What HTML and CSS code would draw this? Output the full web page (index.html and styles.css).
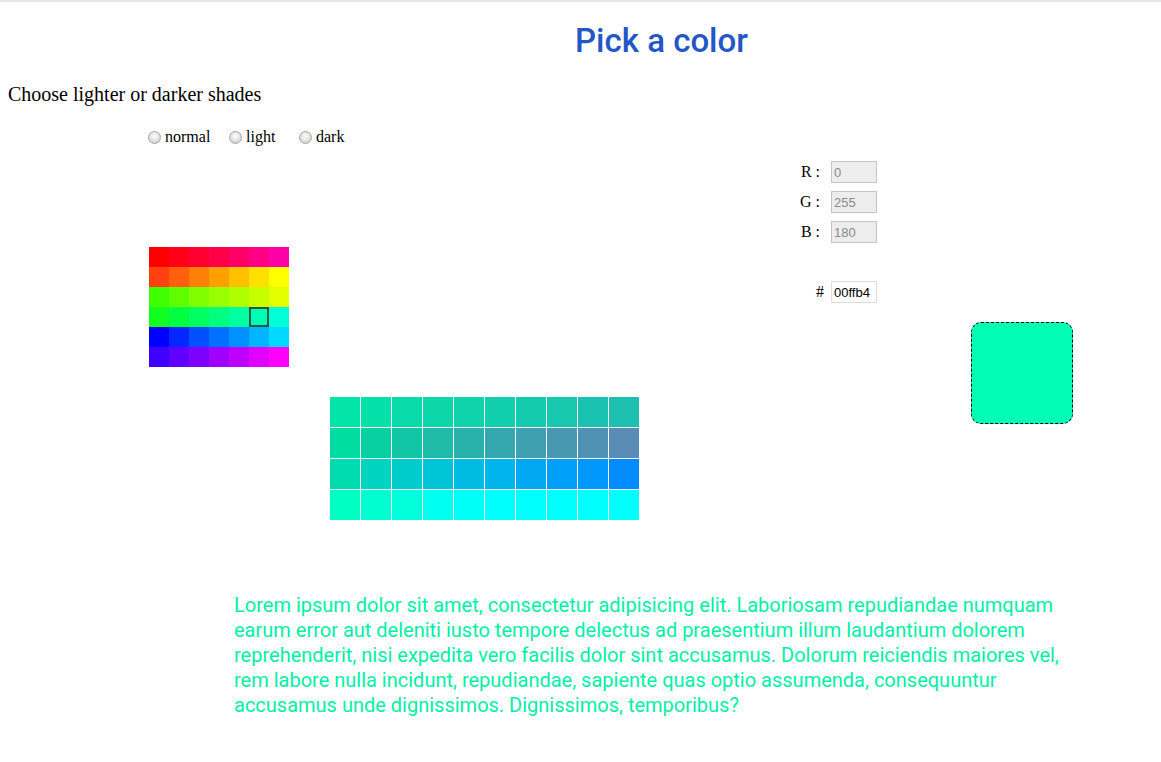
FILE: index.html
```html
<!DOCTYPE html>
<html lang="en">
<head>
<meta charset="utf-8">
<title>Pick a color</title>
<link rel="stylesheet" href="styles.css">
</head>
<body>
<div class="page">
  <h1 class="title">Pick a color</h1>
  <p class="subtitle">Choose lighter or darker shades</p>

  <div class="main">
    <div class="left">
      <div class="options">
        <label class="opt opt-normal"><input type="radio" name="shade" class="radio">normal</label>
        <label class="opt opt-light"><input type="radio" name="shade" class="radio">light</label>
        <label class="opt opt-dark"><input type="radio" name="shade" class="radio">dark</label>
      </div>

      <div class="palette">
        <div class="cell" style="background:#ff0000"></div>
        <div class="cell" style="background:#ff0018"></div>
        <div class="cell" style="background:#ff0030"></div>
        <div class="cell" style="background:#ff0048"></div>
        <div class="cell" style="background:#ff0066"></div>
        <div class="cell" style="background:#ff0084"></div>
        <div class="cell" style="background:#ff00a6"></div>

        <div class="cell" style="background:#ff4010"></div>
        <div class="cell" style="background:#ff6010"></div>
        <div class="cell" style="background:#ff8008"></div>
        <div class="cell" style="background:#ffa000"></div>
        <div class="cell" style="background:#ffc000"></div>
        <div class="cell" style="background:#ffe000"></div>
        <div class="cell" style="background:#ffff00"></div>

        <div class="cell" style="background:#40ff00"></div>
        <div class="cell" style="background:#60ff00"></div>
        <div class="cell" style="background:#80ff00"></div>
        <div class="cell" style="background:#98ff00"></div>
        <div class="cell" style="background:#b0ff00"></div>
        <div class="cell" style="background:#c8ff00"></div>
        <div class="cell" style="background:#e4ff00"></div>

        <div class="cell" style="background:#10ff20"></div>
        <div class="cell" style="background:#00ff40"></div>
        <div class="cell" style="background:#00ff60"></div>
        <div class="cell" style="background:#00ff80"></div>
        <div class="cell" style="background:#00ffa0"></div>
        <div class="cell selected" style="background:#00ffb4"></div>
        <div class="cell" style="background:#00ffd8"></div>

        <div class="cell" style="background:#0000ff"></div>
        <div class="cell" style="background:#0028ff"></div>
        <div class="cell" style="background:#0050ff"></div>
        <div class="cell" style="background:#0070ff"></div>
        <div class="cell" style="background:#0090ff"></div>
        <div class="cell" style="background:#00b4ff"></div>
        <div class="cell" style="background:#00d8ff"></div>

        <div class="cell" style="background:#4000ff"></div>
        <div class="cell" style="background:#6000ff"></div>
        <div class="cell" style="background:#8000ff"></div>
        <div class="cell" style="background:#a000ff"></div>
        <div class="cell" style="background:#c000ff"></div>
        <div class="cell" style="background:#e000ff"></div>
        <div class="cell" style="background:#ff00ff"></div>
      </div>

      <div class="shades">
        <div class="shade" style="background:#02e4a7"></div>
        <div class="shade" style="background:#05dfa8"></div>
        <div class="shade" style="background:#08dba9"></div>
        <div class="shade" style="background:#0bd7aa"></div>
        <div class="shade" style="background:#0ed3ab"></div>
        <div class="shade" style="background:#11cfac"></div>
        <div class="shade" style="background:#14cbad"></div>
        <div class="shade" style="background:#17c7ae"></div>
        <div class="shade" style="background:#1ac3af"></div>
        <div class="shade" style="background:#1fbfb0"></div>

        <div class="shade" style="background:#00dca0"></div>
        <div class="shade" style="background:#08d0a2"></div>
        <div class="shade" style="background:#12c6a5"></div>
        <div class="shade" style="background:#1dbba8"></div>
        <div class="shade" style="background:#28b0ab"></div>
        <div class="shade" style="background:#33a8ae"></div>
        <div class="shade" style="background:#3ea0b0"></div>
        <div class="shade" style="background:#4898b2"></div>
        <div class="shade" style="background:#5092b3"></div>
        <div class="shade" style="background:#5a8db5"></div>

        <div class="shade" style="background:#00dcb0"></div>
        <div class="shade" style="background:#00d4c0"></div>
        <div class="shade" style="background:#00cccc"></div>
        <div class="shade" style="background:#00c4d8"></div>
        <div class="shade" style="background:#00bce2"></div>
        <div class="shade" style="background:#00b4ec"></div>
        <div class="shade" style="background:#00a8f2"></div>
        <div class="shade" style="background:#00a0f8"></div>
        <div class="shade" style="background:#0098fc"></div>
        <div class="shade" style="background:#008cff"></div>

        <div class="shade" style="background:#00ffc2"></div>
        <div class="shade" style="background:#00ffce"></div>
        <div class="shade" style="background:#00ffda"></div>
        <div class="shade" style="background:#00ffee"></div>
        <div class="shade" style="background:#00fff6"></div>
        <div class="shade" style="background:#00ffff"></div>
        <div class="shade" style="background:#00ffff"></div>
        <div class="shade" style="background:#00ffff"></div>
        <div class="shade" style="background:#00ffff"></div>
        <div class="shade" style="background:#00ffff"></div>
      </div>
    </div>

    <div class="right">
      <div class="fields">
        <div class="field"><span class="field-label">R :</span><input class="num" type="text" value="0" disabled></div>
        <div class="field"><span class="field-label">G :</span><input class="num" type="text" value="255" disabled></div>
        <div class="field"><span class="field-label">B :</span><input class="num" type="text" value="180" disabled></div>
        <div class="field field-hex"><span class="field-label hex-label">#</span><input class="num hex" type="text" value="00ffb4"></div>
      </div>
      <div class="swatch"></div>
    </div>
  </div>

  <p class="lorem">Lorem ipsum dolor sit amet, consectetur adipisicing elit. Laboriosam repudiandae numquam earum error aut deleniti iusto tempore delectus ad praesentium illum laudantium dolorem reprehenderit, nisi expedita vero facilis dolor sint accusamus. Dolorum reiciendis maiores vel, rem labore nulla incidunt, repudiandae, sapiente quas optio assumenda, consequuntur accusamus unde dignissimos. Dignissimos, temporibus?</p>
</div>
</body>
</html>
```

FILE: styles.css
```css
* {
  box-sizing: border-box;
}

html, body {
  margin: 0;
  padding: 0;
  background: #ffffff;
}

body {
  font-family: "Liberation Serif", "Times New Roman", serif;
  color: #000;
}

.page {
  border-top: 2px solid #e4e4e4;
  min-height: 760px;
}

.title {
  margin: 20px 0 0;
  padding-left: 162px;
  text-align: center;
  font-family: Roboto, "Noto Sans", sans-serif;
  font-weight: 500;
  font-size: 33px;
  line-height: 38px;
  color: #2356c6;
}

.subtitle {
  margin: 23px 0 22px;
  padding-left: 8px;
  font-size: 20px;
  line-height: 23px;
}

.main {
  display: flex;
  align-items: flex-start;
}

.left {
  width: 801px;
  padding-left: 148px;
  display: flex;
  flex-direction: column;
  align-items: flex-start;
}

.options {
  display: flex;
  align-items: center;
  height: 18px;
  font-size: 16px;
  line-height: 18px;
}

.opt {
  display: flex;
  align-items: center;
}

.opt-normal { width: 81px; }
.opt-light { width: 70px; }

.radio {
  -webkit-appearance: none;
  appearance: none;
  width: 13px;
  height: 13px;
  margin: 0 4px 0 0;
  border: 1px solid #a6a6a6;
  border-radius: 50%;
  background: radial-gradient(circle at 50% 40%, #ffffff 0%, #e6e6e6 45%, #c4c4c4 100%);
}

.palette {
  margin-top: 101px;
  margin-left: 1px;
  display: grid;
  grid-template-columns: repeat(7, 20px);
  grid-auto-rows: 20px;
}

.cell {
  width: 20px;
  height: 20px;
}

.cell.selected {
  box-shadow: inset 0 0 0 2px #1c5a44;
}

.shades {
  margin-top: 30px;
  margin-left: 182px;
  display: grid;
  grid-template-columns: repeat(10, 30px);
  grid-auto-rows: 30px;
  gap: 1px;
}

.right {
  width: 272px;
  margin-top: 33px;
  display: flex;
  flex-direction: column;
}

.fields {
  width: 76px;
  display: flex;
  flex-direction: column;
  gap: 8px;
}

.field {
  display: flex;
  align-items: center;
  justify-content: flex-end;
  font-size: 16px;
  line-height: 18px;
}

.field-label {
  margin-right: 11px;
  white-space: nowrap;
}

.field-hex {
  margin-top: 30px;
}

.hex-label {
  margin-right: 7px;
}

.num {
  width: 46px;
  height: 22px;
  padding: 0 2px;
  border: 1px solid #c4c4c4;
  background: #ededed;
  color: #8a8a8a;
  font-family: "Liberation Sans", Arial, sans-serif;
  font-size: 13px;
}

.num.hex {
  background: #ffffff;
  color: #000;
  border-color: #dcdcdc;
}

.swatch {
  align-self: flex-end;
  margin-top: 19px;
  width: 102px;
  height: 102px;
  border: 1px dashed #000;
  border-radius: 10px;
  background: #00ffb4;
}

.lorem {
  margin: 73px 0 0 234px;
  width: 830px;
  font-family: Roboto, "Noto Sans", sans-serif;
  font-size: 20px;
  line-height: 25px;
  color: #00f0aa;
}
```
